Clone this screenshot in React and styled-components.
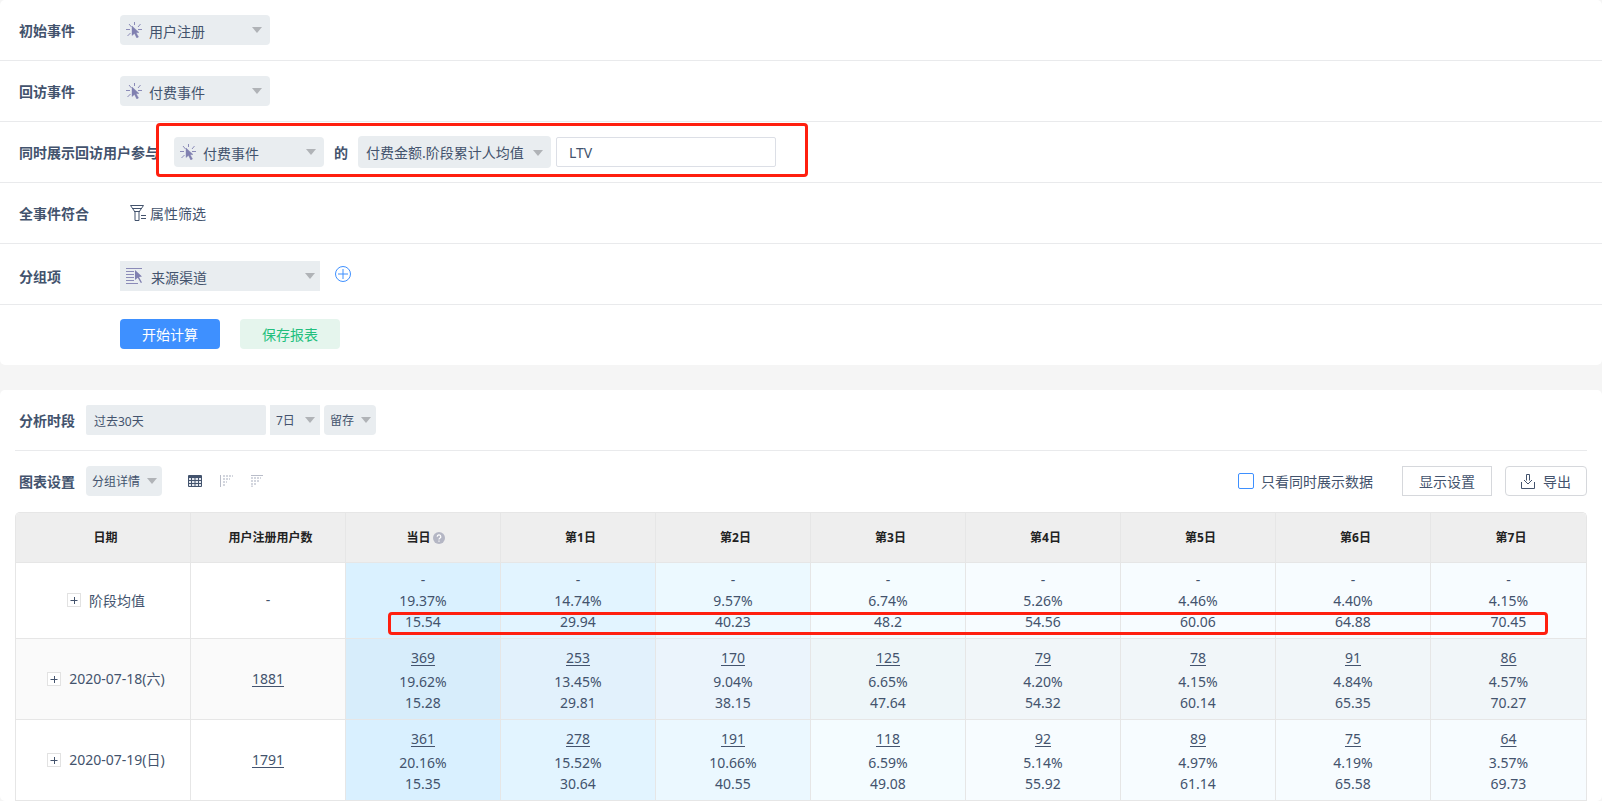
import React from "react";
import styled, { createGlobalStyle, css } from "styled-components";

const ink = "#43536d";

const GlobalStyle = createGlobalStyle`
  *, *::before, *::after { box-sizing: border-box; }
  body {
    margin: 0;
    background: #f5f5f5;
    color: ${ink};
    font-family: "Noto Sans", "Noto Sans CJK SC", sans-serif;
    font-size: 14px;
    line-height: 21px;
  }
  button, input, select { font: inherit; color: inherit; margin: 0; }
  svg { display: block; flex: none; }
`;

const Page = styled.div`
  display: flex;
  flex-direction: column;
  gap: 25px;
`;

const Panel = styled.section`
  background: #fff;
  border-radius: 5px;
`;

const ConditionRow = styled.div`
  display: flex;
  align-items: center;
  min-height: 61px;
  padding: 0 19px;
  border-bottom: 1px solid #e9eaec;
`;

const GroupRow = styled(ConditionRow)`
  padding-top: 4px;
`;

const ActionRow = styled.div`
  display: flex;
  gap: 20px;
  padding: 14px 20px 16px 120px;
`;

const RowLabel = styled.label`
  width: ${(p) => (p.$wide ? "155px" : "101px")};
  flex: none;
  font-weight: 700;
  white-space: nowrap;
`;

const Inline = styled.span`
  font-weight: 700;
  margin: 0 10px;
`;

const SelectBox = styled.div`
  position: relative;
  flex: none;
  width: ${(p) => p.$width}px;
  height: ${(p) => (p.$tall ? 32 : 30)}px;

  > svg {
    position: absolute;
    pointer-events: none;
  }
  > svg:first-child:not(:last-child) {
    left: 6px;
    top: 7px;
  }
  > svg:last-child {
    right: ${(p) => (p.$small ? 5 : 8)}px;
    top: ${(p) => (p.$tall ? 14 : 12)}px;
  }
`;

const SelectControl = styled.select`
  appearance: none;
  display: block;
  width: 100%;
  height: 100%;
  border: 0;
  border-radius: ${(p) => (p.$square ? 0 : 4)}px;
  background: #e9edf0;
  outline: none;
  padding: ${(p) => (p.$icon ? "2px 20px 0 29px" : "0 0 0 8px")};
  ${(p) =>
    p.$icon &&
    p.$square &&
    css`
      padding-left: 31px;
    `}
  ${(p) =>
    p.$small &&
    css`
      padding-left: 6px;
      font-size: 12px;
    `}
`;

const TextBox = styled.input`
  width: 220px;
  height: 30px;
  margin-left: 5px;
  padding: 0 12px;
  border: 1px solid #dcdfe6;
  border-radius: 2px;
  background: #fff;
  outline: none;
`;

const DateBox = styled.input`
  width: 180px;
  height: 30px;
  padding: 2px 8px 0;
  border: 0;
  border-radius: 2px;
  background: #e9edf0;
  font-size: 12px;
  outline: none;
`;

const Highlighted = styled.div`
  position: relative;
  display: flex;
  align-items: center;
`;

const Outline = styled.div`
  position: absolute;
  border: 3px solid #ff1f0f;
  border-radius: 4px;
  pointer-events: none;
`;

const FieldOutline = styled(Outline)`
  inset: -13px -32px -9px -18px;
`;

const ValueOutline = styled(Outline)`
  top: 99px;
  left: 372px;
  right: 38px;
  height: 23px;
`;

const LinkButton = styled.button`
  display: flex;
  align-items: center;
  gap: 4px;
  margin-left: 10px;
  padding: 0;
  border: 0;
  background: none;
`;

const AddButton = styled.button`
  align-self: flex-start;
  margin: 18px 0 0 15px;
  padding: 0;
  border: 0;
  background: none;
`;

const ActionButton = styled.button`
  width: 100px;
  height: 30px;
  padding: 0;
  border: 0;
  border-radius: 4px;
  background: ${(p) => (p.$primary ? "#3e90ff" : "#e5f5ed")};
  color: ${(p) => (p.$primary ? "#fff" : "#22bf7d")};
`;

const ReportPanel = styled(Panel)`
  padding: 0 15px;
`;

const ToolRow = styled.div`
  display: flex;
  align-items: center;
  gap: 4px;
  height: 61px;
  padding-left: 4px;
  border-bottom: 1px solid ${(p) => (p.$ruled ? "#e9eaec" : "transparent")};
`;

const ToolLabel = styled.label`
  width: 63px;
  font-weight: 700;
`;

const ViewSwitch = styled.div`
  display: flex;
  align-items: center;
  gap: 18px;
  margin-left: 22px;
`;

const IconButton = styled.button`
  padding: 0;
  border: 0;
  background: none;
`;

const RightTools = styled.div`
  display: flex;
  align-items: center;
  margin-left: auto;
`;

const CheckLabel = styled.label`
  display: flex;
  align-items: center;
  gap: 7px;
  margin-right: 29px;
`;

const CheckBox = styled.input`
  appearance: none;
  width: 16px;
  height: 16px;
  border: 1px solid #3e90ff;
  border-radius: 2px;
  background: #fff;
`;

const OutlineButton = styled.button`
  display: flex;
  align-items: center;
  justify-content: center;
  gap: 8px;
  min-width: ${(p) => (p.$round ? 82 : 90)}px;
  height: 30px;
  padding: 0 14px;
  border: 1px solid #d6d8dc;
  border-radius: ${(p) => (p.$round ? 4 : 0)}px;
  background: #fff;
  & + & { margin-left: 13px; }
`;

const TableFrame = styled.div`
  position: relative;
  border: solid #e6e6e6;
  border-width: 1px 1px 0;
  border-radius: 5px 5px 0 0;
  overflow: hidden;
`;

const DataTable = styled.table`
  width: 100%;
  table-layout: fixed;
  border-collapse: separate;
  border-spacing: 0;
  text-align: center;
  font-size: 14px;
  line-height: 21px;

  th, td {
    border: solid #e6e6e6;
    border-width: 0 1px 1px 0;
  }
  th:last-child, td:last-child { border-right: 0; }
`;

const DateColumn = styled.col`
  width: 175px;
`;

const HeadCell = styled.th`
  height: 50px;
  padding: 0 0 0 5px;
  background: #eee;
  color: #222;
  font-size: 12px;
  font-weight: 700;
`;

const HeadContent = styled.span`
  display: inline-flex;
  align-items: center;
  gap: 2px;
`;

const Cell = styled.td`
  padding: ${(p) => (p.$summary ? "6px 0" : "8px 0 6px")};
  background: ${(p) => p.$bg};
`;

const TotalCell = styled.td`
  padding: 0 0 2px;
  background: ${(p) => p.$bg};
`;

const DateCell = styled(TotalCell)`
  padding-left: 6px;
`;

const DateContent = styled.span`
  display: inline-flex;
  align-items: center;
  gap: 8px;
`;

const ExpandButton = styled.button`
  width: 14px;
  height: 14px;
  padding: 0;
  border: 1px solid #e2e2e2;
  background: #fff;
  display: flex;
  align-items: center;
  justify-content: center;
`;

const Line = styled.div`
  margin-top: ${(p) => (p.$spaced ? 3 : 0)}px;
`;

const CountLink = styled.a`
  color: inherit;
  text-decoration: underline 1px;
  text-underline-offset: 2px;
`;

const Caret = () => (
  <svg width="10" height="6" viewBox="0 0 10 6">
    <path d="M0 0h10L5 6z" fill="#b0b3b7" />
  </svg>
);

const EventIcon = () => (
  <svg width="16" height="16" viewBox="0 0 16 16" fill="none" stroke="#8b8bb8">
    <path d="M8.500 0v3M0 7.500h4M12 7.500h4M3 2l2.500 3M14.500 2l-2.500 3M1.500 14l3-3" />
    <path d="M6 4l7 6.500-2.800.2 2.300 4.300-1.700 1-2.300-4.500L6 13.500z" fill="#8080b0" stroke="#8080b0" strokeWidth=".4" />
  </svg>
);

const GroupIcon = () => (
  <svg width="16" height="16" viewBox="0 0 16 16" fill="none" stroke="#8b8bb8">
    <path d="M0 .5h16M0 3.500h8M0 6.500h8M0 9.500h8M0 12.500h8M0 15.500h12" />
    <path d="M9 2l7 6.500-3 .4 3 5.500-1.200.7-3-5.300L9 12z" fill="#8080b0" stroke="none" />
  </svg>
);

const FilterIcon = () => (
  <svg width="16" height="16" viewBox="0 0 16 16" fill="none" stroke={ink}>
    <path d="M.5.500h13L9 7v8.500H5V7zM2 3.500h10M4 6.500h6M11 10.500h5M11 13.500h5" />
  </svg>
);

const PlusCircleIcon = () => (
  <svg width="16" height="16" viewBox="0 0 16 16" fill="none" stroke="#3e90ff">
    <circle cx="8" cy="8" r="7.500" />
    <path d="M3 8h10M8 3v10" />
  </svg>
);

const GridIcon = () => (
  <svg width="14" height="12" viewBox="0 0 14 12">
    <rect width="14" height="12" rx="1" fill={ink} />
    <path
      d="M1 3h2v2H1zM4 3h2.500v2H4zM7.500 3H10v2H7.500zM11 3h2v2h-2zM1 6h2v2H1zM4 6h2.500v2H4zM7.500 6H10v2H7.500zM11 6h2v2h-2zM1 9h2v2H1zM4 9h2.500v2H4zM7.500 9H10v2H7.500zM11 9h2v2h-2z"
      fill="#e4e8ef"
    />
  </svg>
);

const LeftDotsIcon = () => (
  <svg width="13" height="12" viewBox="0 0 13 12" fill="none">
    <path d="M.5 0v12" stroke="#b9bdc9" />
    <path d="M3 1h10M3 4h7M3 7h4M3 10h2" stroke="#d3d6de" strokeWidth="2" strokeDasharray="2 1" />
  </svg>
);

const TopDotsIcon = () => (
  <svg width="13" height="12" viewBox="0 0 13 12" fill="none">
    <path d="M0 .5h12" stroke="#b9bdc9" />
    <path d="M0 3h10M0 6h8M0 9h5M0 11.500h2" stroke="#d3d6de" strokeWidth="2" strokeDasharray="2 1" />
  </svg>
);

const ExportIcon = () => (
  <svg width="14" height="15" viewBox="0 0 14 15" fill="none" stroke={ink}>
    <path d="M.5 8v6.500h13V8M5.500 6.500V.500h3v6M3 6l4 4 4-4" />
  </svg>
);

const HelpIcon = () => (
  <svg width="12" height="12" viewBox="0 0 12 12" fill="none">
    <circle cx="6" cy="6" r="6" fill="#b4b6c4" />
    <path d="M4.200 4.700a1.800 1.800 0 1 1 2.600 1.600c-.6.300-.8.500-.8 1.200M6 8.600v1.200" stroke="#fff" strokeWidth="1.200" />
  </svg>
);

const PlusIcon = () => (
  <svg width="8" height="8" viewBox="0 0 8 8" fill="none" stroke={ink}>
    <path d="M.5 4.500h7M4.500 1v7" />
  </svg>
);

function Select({ id, label, value, width, icon, tall, small, square }) {
  return (
    <SelectBox $width={width} $tall={tall} $small={small || square}>
      {icon}
      <SelectControl id={id} aria-label={label} $icon={Boolean(icon)} $small={small} $square={square}>
        <option>{value}</option>
      </SelectControl>
      <Caret />
    </SelectBox>
  );
}

const days = ["第1日", "第2日", "第3日", "第4日", "第5日", "第6日", "第7日"];

const rows = [
  {
    date: "阶段均值",
    total: null,
    counts: null,
    rates: ["19.37%", "14.74%", "9.57%", "6.74%", "5.26%", "4.46%", "4.40%", "4.15%"],
    values: ["15.54", "29.94", "40.23", "48.2", "54.56", "60.06", "64.88", "70.45"],
    base: "#fff",
    shades: ["#daf1ff", "#e2f4ff", "#ecf9ff", "#f4fcff", "#f7fcff", "#f7fcff", "#f7fcff", "#f7fcff"],
  },
  {
    date: "2020-07-18(六)",
    total: "1881",
    counts: ["369", "253", "170", "125", "79", "78", "91", "86"],
    rates: ["19.62%", "13.45%", "9.04%", "6.65%", "4.20%", "4.15%", "4.84%", "4.57%"],
    values: ["15.28", "29.81", "38.15", "47.64", "54.32", "60.14", "65.35", "70.27"],
    base: "#fafafa",
    shades: ["#d7edfb", "#e2f1fc", "#ebf4fc", "#eef6f9", "#f1f6f9", "#f1f6f9", "#f1f6f9", "#f1f6f9"],
  },
  {
    date: "2020-07-19(日)",
    total: "1791",
    counts: ["361", "278", "191", "118", "92", "89", "75", "64"],
    rates: ["20.16%", "15.52%", "10.66%", "6.59%", "5.14%", "4.97%", "4.19%", "3.57%"],
    values: ["15.35", "30.64", "40.55", "49.08", "55.92", "61.14", "65.58", "69.73"],
    base: "#fff",
    shades: ["#d9f0ff", "#e2f4ff", "#ebf8ff", "#f4fcff", "#f7fcff", "#f7fcff", "#f7fcff", "#f7fcff"],
  },
];

function DataRow({ row }) {
  const summary = !row.counts;
  return (
    <tr>
      <DateCell $bg={row.base}>
        <DateContent>
          <ExpandButton type="button" aria-label="展开"><PlusIcon /></ExpandButton>
          {row.date}
        </DateContent>
      </DateCell>
      <TotalCell $bg={row.base}>
        {row.total ? <CountLink href="#users">{row.total}</CountLink> : "-"}
      </TotalCell>
      {row.rates.map((rate, i) => (
        <Cell key={i} $summary={summary} $bg={row.shades[i]}>
          <Line>{summary ? "-" : <CountLink href="#users">{row.counts[i]}</CountLink>}</Line>
          <Line $spaced={!summary}>{rate}</Line>
          <Line>{row.values[i]}</Line>
        </Cell>
      ))}
    </tr>
  );
}

export default function App() {
  return (
    <Page>
      <GlobalStyle />
      <Panel>
        <ConditionRow>
          <RowLabel htmlFor="initial">初始事件</RowLabel>
          <Select id="initial" value="用户注册" width={150} icon={<EventIcon />} />
        </ConditionRow>
        <ConditionRow>
          <RowLabel htmlFor="return">回访事件</RowLabel>
          <Select id="return" value="付费事件" width={150} icon={<EventIcon />} />
        </ConditionRow>
        <ConditionRow>
          <RowLabel htmlFor="joined" $wide>同时展示回访用户参与</RowLabel>
          <Highlighted>
            <Select id="joined" value="付费事件" width={150} icon={<EventIcon />} />
            <Inline>的</Inline>
            <Select label="指标" value="付费金额.阶段累计人均值" width={193} tall />
            <TextBox aria-label="指标名称" defaultValue="LTV" />
            <FieldOutline />
          </Highlighted>
        </ConditionRow>
        <ConditionRow>
          <RowLabel as="span">全事件符合</RowLabel>
          <LinkButton type="button"><FilterIcon />属性筛选</LinkButton>
        </ConditionRow>
        <GroupRow>
          <RowLabel htmlFor="group">分组项</RowLabel>
          <Select id="group" value="来源渠道" width={200} icon={<GroupIcon />} square />
          <AddButton type="button" aria-label="添加分组项"><PlusCircleIcon /></AddButton>
        </GroupRow>
        <ActionRow>
          <ActionButton type="button" $primary>开始计算</ActionButton>
          <ActionButton type="button">保存报表</ActionButton>
        </ActionRow>
      </Panel>

      <ReportPanel>
        <ToolRow $ruled>
          <ToolLabel htmlFor="period">分析时段</ToolLabel>
          <DateBox id="period" defaultValue="过去30天" />
          <Select label="天数" value="7日" width={50} small square />
          <Select label="类型" value="留存" width={52} small />
        </ToolRow>
        <ToolRow>
          <ToolLabel htmlFor="chart">图表设置</ToolLabel>
          <Select id="chart" value="分组详情" width={76} small />
          <ViewSwitch>
            <IconButton type="button" aria-label="表格"><GridIcon /></IconButton>
            <IconButton type="button" aria-label="左对齐图"><LeftDotsIcon /></IconButton>
            <IconButton type="button" aria-label="顶对齐图"><TopDotsIcon /></IconButton>
          </ViewSwitch>
          <RightTools>
            <CheckLabel>
              <CheckBox type="checkbox" />
              只看同时展示数据
            </CheckLabel>
            <OutlineButton type="button">显示设置</OutlineButton>
            <OutlineButton type="button" $round><ExportIcon />导出</OutlineButton>
          </RightTools>
        </ToolRow>
        <TableFrame>
          <DataTable>
            <colgroup>
              <DateColumn />
              <col span="9" />
            </colgroup>
            <thead>
              <tr>
                <HeadCell>日期</HeadCell>
                <HeadCell>用户注册用户数</HeadCell>
                <HeadCell><HeadContent>当日<HelpIcon /></HeadContent></HeadCell>
                {days.map((day) => <HeadCell key={day}>{day}</HeadCell>)}
              </tr>
            </thead>
            <tbody>
              {rows.map((row) => <DataRow key={row.date} row={row} />)}
            </tbody>
          </DataTable>
          <ValueOutline />
        </TableFrame>
      </ReportPanel>
    </Page>
  );
}
